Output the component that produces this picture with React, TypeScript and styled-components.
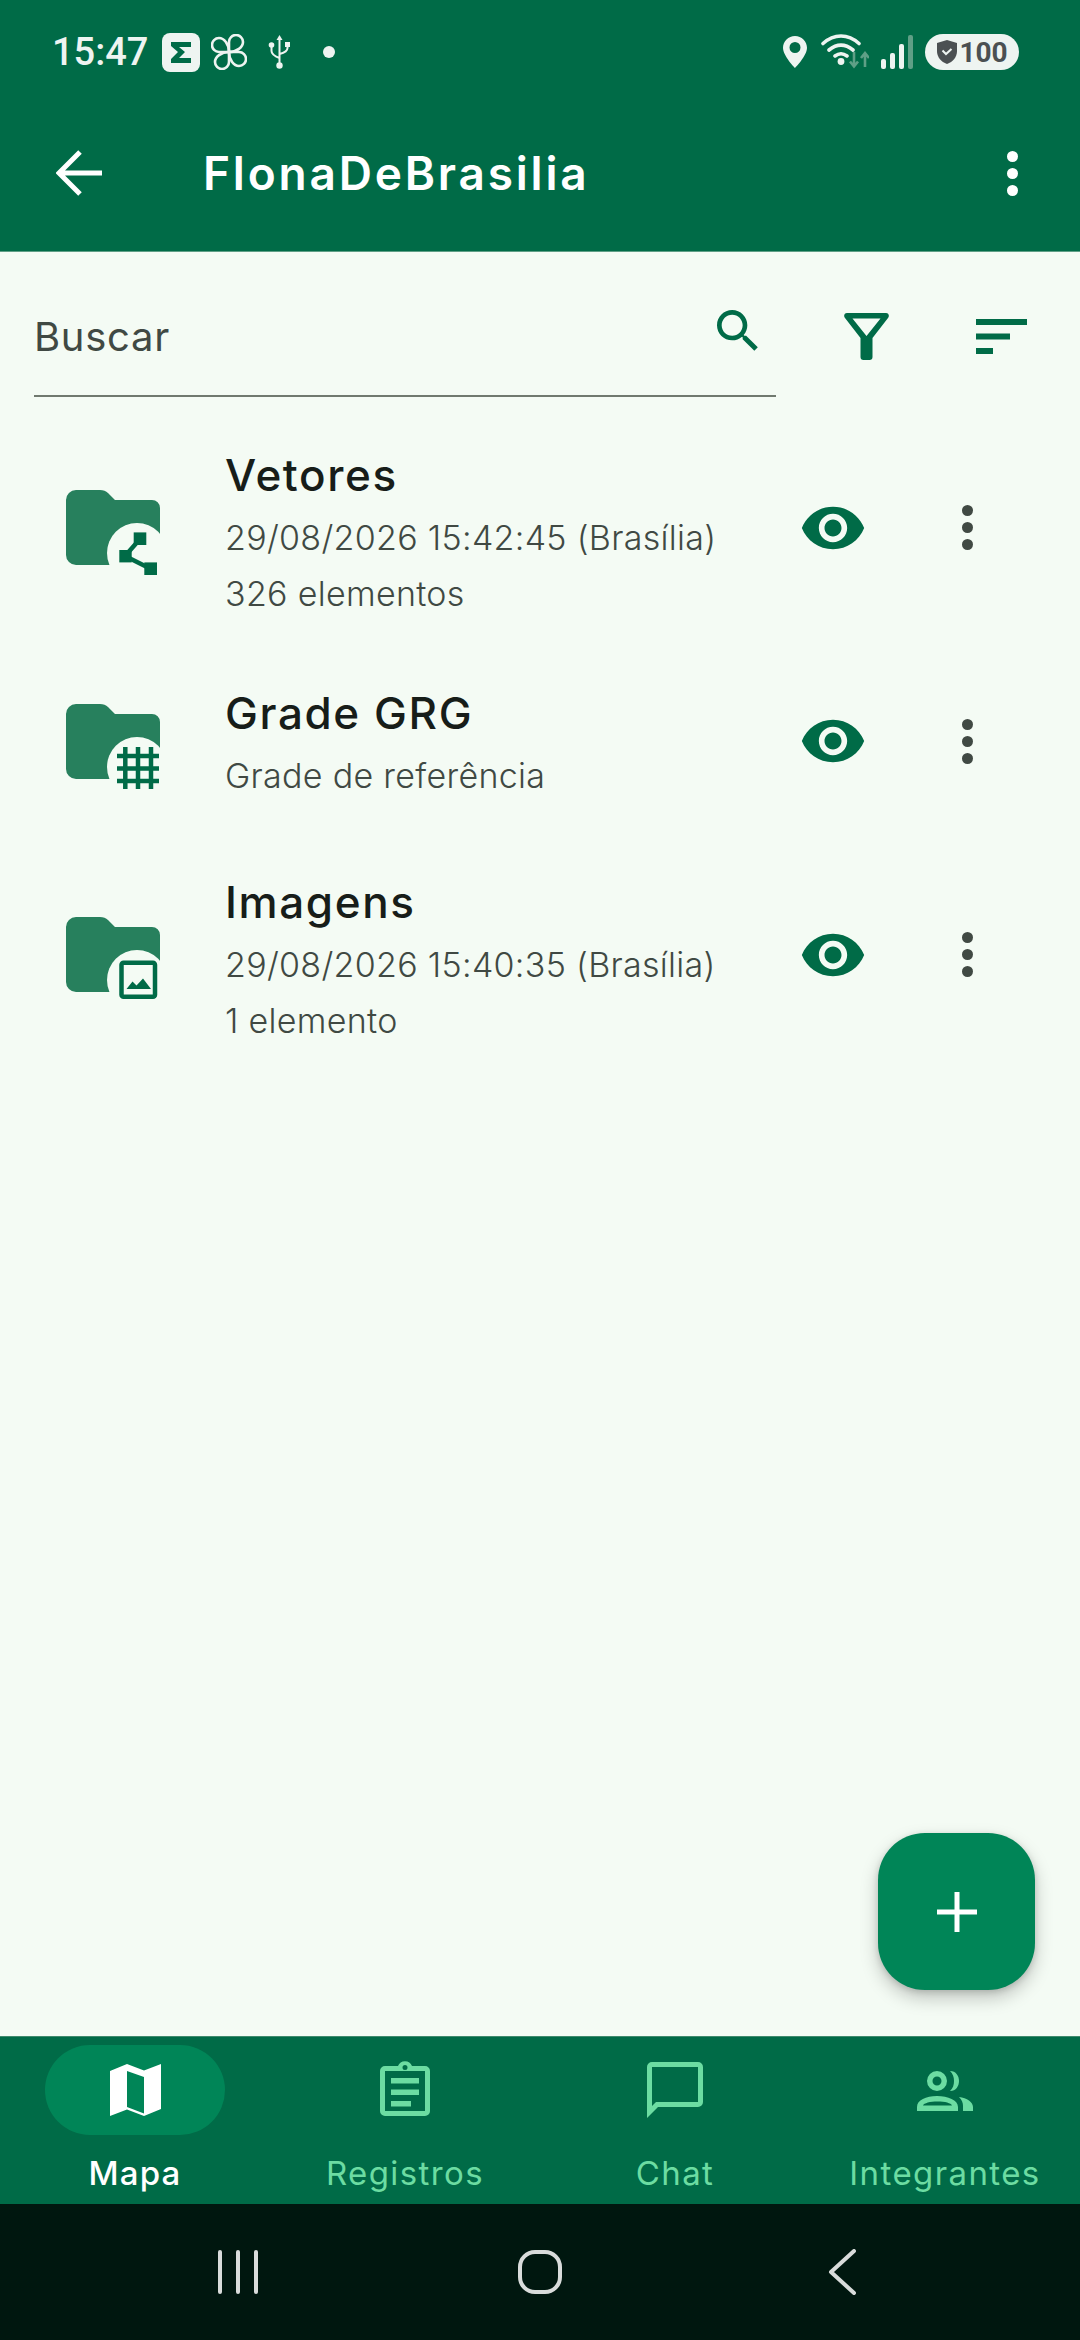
import React from "react";
import styled, { createGlobalStyle } from "styled-components";

const GREEN = "#006b47";
const MINT = "#6cdca2";

const GlobalStyle = createGlobalStyle`
  html, body {
    margin: 0;
    padding: 0;
    background: #f4fbf4;
    font-family: "Inter", "Liberation Sans", sans-serif;
  }
  * {
    box-sizing: border-box;
  }
`;

const Screen = styled.div`
  position: relative;
  display: flex;
  flex-direction: column;
  width: 1080px;
  height: 2340px;
  overflow: hidden;
  background: #f4fbf4;
`;

const Header = styled.header`
  background: ${GREEN};
  color: #fff;
  border-bottom: 1px solid #5f9f86;
  height: 252px;
`;

const StatusBar = styled.div`
  display: flex;
  align-items: center;
  justify-content: space-between;
  height: 104px;
  padding: 0 61px 0 52px;
  color: #eef4f1;
`;

const StatusGroup = styled.div<{ $gap: number }>`
  display: flex;
  align-items: center;
  gap: ${(p) => p.$gap}px;
`;

const Clock = styled.span`
  font-family: "Roboto", sans-serif;
  font-size: 38px;
  font-weight: 500;
  margin-right: 3px;
`;

const BatteryPill = styled.div`
  display: flex;
  align-items: center;
  justify-content: center;
  gap: 2px;
  width: 94px;
  height: 36px;
  border-radius: 18px;
  background: #eef4f1;
  color: #4b5052;
  font-family: "Roboto", sans-serif;
  font-size: 28px;
  font-weight: 700;
`;

const Toolbar = styled.div`
  display: flex;
  align-items: center;
  height: 138px;
  padding: 0 62px 0 56px;
`;

const ToolbarTitle = styled.h1`
  flex: 1;
  margin: 0 0 0 101px;
  font-size: 46px;
  font-weight: 600;
  letter-spacing: 2.8px;
`;

const SearchRow = styled.div`
  display: flex;
  align-items: flex-end;
  height: 145px;
  padding-left: 34px;
  flex-shrink: 0;
`;

const SearchField = styled.div`
  display: flex;
  align-items: center;
  justify-content: space-between;
  width: 742px;
  height: 144px;
  padding: 24px 10px 0 0;
  border-bottom: 2px solid #70796f;
`;

const SearchLabel = styled.span`
  font-size: 40px;
  color: #404943;
  letter-spacing: 0.7px;
`;

const ToolSlot = styled.div<{ $width: number }>`
  display: flex;
  align-items: center;
  justify-content: center;
  width: ${(p) => p.$width}px;
  height: 144px;
  padding-top: 22px;
`;

const List = styled.ul`
  flex: 1;
  list-style: none;
  margin: 24px 0 0;
  padding: 0;
`;

const Row = styled.li`
  display: grid;
  grid-template-columns: 159px 1fr 135px 135px;
  align-items: center;
  height: 213.5px;
  padding: 0 45px 0 66px;
`;

const RowText = styled.div`
  display: flex;
  flex-direction: column;
`;

const RowTitle = styled.div`
  font-size: 44px;
  line-height: 70px;
  font-weight: 500;
  letter-spacing: 1.6px;
  color: #171d19;
`;

const RowMeta = styled.div`
  font-size: 34px;
  line-height: 56px;
  font-weight: 300;
  letter-spacing: 0.3px;
  color: #404943;

  & + & {
    margin-bottom: -7px;
  }
`;

const ActionSlot = styled.div`
  display: flex;
  align-items: center;
  justify-content: center;
`;

const Fab = styled.button`
  position: absolute;
  left: 878px;
  top: 1833px;
  display: flex;
  align-items: center;
  justify-content: center;
  width: 157px;
  height: 157px;
  padding: 0;
  border: 0;
  border-radius: 47px;
  background: #008557;
  box-shadow: 0 8px 18px rgba(0, 0, 0, 0.22), 0 2px 6px rgba(0, 0, 0, 0.14);
`;

const BottomNav = styled.nav`
  display: grid;
  grid-template-columns: repeat(4, 270px);
  height: 168px;
  background: ${GREEN};
  border-top: 1px solid #3f8a6d;
  flex-shrink: 0;
`;

const Tab = styled.div`
  display: flex;
  flex-direction: column;
  align-items: center;
`;

const TabIcon = styled.div<{ $active?: boolean }>`
  display: flex;
  align-items: center;
  justify-content: center;
  width: 180px;
  height: 90px;
  margin-top: 8px;
  border-radius: 45px;
  background: ${(p) => (p.$active ? "#008557" : "transparent")};
`;

const TabLabel = styled.span<{ $active?: boolean }>`
  margin-top: 18px;
  font-size: 33px;
  line-height: 40px;
  font-weight: ${(p) => (p.$active ? 500 : 400)};
  letter-spacing: ${(p) => (p.$active ? 1.2 : 1.4)}px;
  color: ${(p) => (p.$active ? "#fff" : MINT)};
`;

const SystemNav = styled.div`
  display: grid;
  grid-template-columns: 1fr 1fr 1fr;
  align-items: center;
  height: 136px;
  padding: 0 87px;
  background: #00170f;
  flex-shrink: 0;
`;

const SystemKey = styled.div`
  display: flex;
  justify-content: center;
`;

const DotsIcon = ({ color, r = 5.5, gap = 17 }: { color: string; r?: number; gap?: number }) => (
  <svg width={r * 2} height={gap * 2 + r * 2} viewBox={`0 0 ${r * 2} ${gap * 2 + r * 2}`}>
    <circle cx={r} cy={r} r={r} fill={color} />
    <circle cx={r} cy={r + gap} r={r} fill={color} />
    <circle cx={r} cy={r + gap * 2} r={r} fill={color} />
  </svg>
);

const EyeIcon = () => (
  <svg width="68" height="68" viewBox="0 0 24 24" fill={GREEN}>
    <path d="M12 4.5C7 4.5 2.73 7.61 1 12c1.73 4.39 6 7.5 11 7.5s9.27-3.11 11-7.5c-1.73-4.39-6-7.5-11-7.5zM12 17c-2.76 0-5-2.24-5-5s2.24-5 5-5 5 2.24 5 5-2.24 5-5 5zm0-8c-1.66 0-3 1.34-3 3s1.34 3 3 3 3-1.34 3-3-1.34-3-3-3z" />
  </svg>
);

const FolderBase = ({ children }: { children: React.ReactNode }) => (
  <svg width="96" height="75" viewBox="0 0 96 75" style={{ overflow: "visible", display: "block" }}>
    <path
      d="M0 10a10 10 0 0 1 10-10h24q5 0 8 3l7 7h37a8 8 0 0 1 8 8v47a10 10 0 0 1-10 10H10a10 10 0 0 1-10-10z"
      fill="#27805d"
    />
    <circle cx="71" cy="63" r="30" fill="#f4fbf4" />
    <rect x="41" y="75" width="56" height="22" fill="#f4fbf4" />
    {children}
  </svg>
);

const VectorFolder = () => (
  <FolderBase>
    <path d="M59 66l15-17M59 66l26 13" stroke={GREEN} strokeWidth="4.5" fill="none" />
    <rect x="67.7" y="42.4" width="12.6" height="12.6" fill={GREEN} />
    <rect x="53.3" y="60" width="12.4" height="12.4" fill={GREEN} />
    <rect x="78.3" y="72.4" width="12.7" height="12.6" fill={GREEN} />
  </FolderBase>
);

const GridFolder = () => (
  <FolderBase>
    <path
      d="M59.3 43v42M72 43v42M85 43v42M51 52h42M51 64.5h42M51 77h42"
      stroke={GREEN}
      strokeWidth="4.5"
      fill="none"
    />
  </FolderBase>
);

const ImageFolder = () => (
  <FolderBase>
    <rect x="55.5" y="45.7" width="33.5" height="34" rx="2" stroke={GREEN} strokeWidth="4.5" fill="none" />
    <path d="M60.5 72l6-7.5 4 4 6.5-7 8 10.5z" fill={GREEN} />
  </FolderBase>
);

const rows = [
  { title: "Vetores", meta: ["29/08/2026 15:42:45 (Brasília)", "326 elementos"], Icon: VectorFolder },
  { title: "Grade GRG", meta: ["Grade de referência"], Icon: GridFolder },
  { title: "Imagens", meta: ["29/08/2026 15:40:35 (Brasília)", "1 elemento"], Icon: ImageFolder },
];

const petal = "M18 18V8a7 7 0 0 1 14 0c0 5-6 10-14 10z";

export default function App() {
  return (
    <Screen>
      <GlobalStyle />
      <Header>
        <StatusBar>
          <StatusGroup $gap={11}>
            <Clock>15:47</Clock>
            <svg width="38" height="39" viewBox="0 0 38 39">
              <rect width="38" height="39" rx="8" fill="#eef4f1" />
              <path d="M9 9h20v5H17l6 5-6 6h12v5H9v-4l7-7-7-6z" fill={GREEN} />
            </svg>
            <svg width="36" height="36" viewBox="0 0 36 36" fill="none" stroke="#eef4f1" strokeWidth="2.6" strokeLinejoin="round">
              <path d={petal} />
              <path d={petal} transform="rotate(90 18 18)" />
              <path d={petal} transform="rotate(180 18 18)" />
              <path d={petal} transform="rotate(270 18 18)" />
            </svg>
            <svg width="23" height="34" viewBox="0 0 23 34" fill="none" stroke="#eef4f1" strokeWidth="2" style={{ margin: "0 21px 0 10px" }}>
              <path d="M11.5 4v25M3.5 11v5q0 4 8 7M19.5 10v3q0 4-8 6" />
              <path d="M11.5 0l3 5h-6z" fill="#eef4f1" stroke="none" />
              <circle cx="3.5" cy="10" r="2.8" fill="#eef4f1" stroke="none" />
              <rect x="17" y="7" width="5" height="5" fill="#eef4f1" stroke="none" />
              <circle cx="11.5" cy="30.5" r="3.2" fill="#eef4f1" stroke="none" />
            </svg>
            <svg width="12" height="12" viewBox="0 0 12 12">
              <circle cx="6" cy="6" r="6" fill="#eef4f1" />
            </svg>
          </StatusGroup>
          <StatusGroup $gap={12}>
            <svg width="24" height="32" viewBox="0 0 24 32" style={{ marginRight: 2 }}>
              <path
                fillRule="evenodd"
                d="M12 0C5.4 0 0 5.2 0 11.8 0 20 12 32 12 32s12-12 12-20.200C24 5.200 18.600 0 12 0zm0 17a5.500 5.500 0 1 1 0-11 5.500 5.500 0 0 1 0 11z"
                fill="#eef4f1"
              />
            </svg>
            <svg width="48" height="36" viewBox="0 0 48 36" fill="none">
              <path d="M2 9.500C13 -0.500 27 -0.500 38 9.500M8 16c8-6.500 16-6.500 24 0M14 22c4-3 8-3 12 0" stroke="#eef4f1" strokeWidth="3.600" strokeLinecap="round" />
              <circle cx="20" cy="27.500" r="3.400" fill="#eef4f1" />
              <path d="M33 18v14M29 27.500l4 5 4-5M44 33V19M40 24l4-5 4 5" stroke="#5f9f86" strokeWidth="2.600" />
            </svg>
            <svg width="32" height="34" viewBox="0 0 32 34">
              <rect x="0" y="24" width="5" height="10" rx="2" fill="#eef4f1" />
              <rect x="9" y="18" width="5" height="16" rx="2" fill="#eef4f1" />
              <rect x="18" y="9" width="5" height="25" rx="2" fill="#eef4f1" />
              <rect x="27" y="0" width="5" height="34" rx="2" fill="#5f9f86" />
            </svg>
            <BatteryPill>
              <svg width="20" height="24" viewBox="0 0 20 24" style={{ marginLeft: 1 }}>
                <path d="M10 0l10 3v8c0 6-4 11-10 13C4 22 0 17 0 11V3z" fill="#4b5052" />
                <path d="M5.500 10.500l3.500 3.500 5.500-5" fill="none" stroke="#eef4f1" strokeWidth="2" />
              </svg>
              100
            </BatteryPill>
          </StatusGroup>
        </StatusBar>
        <Toolbar>
          <svg width="46" height="46" viewBox="0 0 46 46" fill="none" stroke="#fff" strokeWidth="5">
            <path d="M46 23H4M24 2L3 23l21 21" />
          </svg>
          <ToolbarTitle>FlonaDeBrasilia</ToolbarTitle>
          <DotsIcon color="#fff" />
        </Toolbar>
      </Header>

      <SearchRow>
        <SearchField>
          <SearchLabel>Buscar</SearchLabel>
          <svg width="56" height="56" viewBox="0 0 24 24" fill={GREEN} style={{ marginTop: -10 }}>
            <path d="M15.500 14h-.79l-.28-.27C15.410 12.590 16 11.110 16 9.500 16 5.910 13.090 3 9.500 3S3 5.910 3 9.500 5.910 16 9.500 16c1.610 0 3.090-.59 4.230-1.570l.27.28v.79l5 4.990L20.490 19l-4.990-5zm-6 0C7.010 14 5 11.990 5 9.500S7.010 5 9.500 5 14 7.010 14 9.500 11.990 14 9.500 14z" />
          </svg>
        </SearchField>
        <ToolSlot $width={180}>
          <svg width="45" height="47" viewBox="0 0 45 47">
            <path
              fillRule="evenodd"
              d="M3 0h39c2.500 0 3.700 2.800 2.200 4.700L28.500 25v19a3 3 0 0 1-3 3h-6a3 3 0 0 1-3-3V25L.8 4.700C-.7 2.800.5 0 3 0zm5.500 5.500L22.500 23l14-17.500z"
              fill={GREEN}
            />
          </svg>
        </ToolSlot>
        <ToolSlot $width={90}>
          <svg width="51" height="35" viewBox="0 0 51 35">
            <rect width="51" height="6" fill={GREEN} />
            <rect y="14.500" width="34" height="6" fill={GREEN} />
            <rect y="29" width="17" height="6" fill={GREEN} />
          </svg>
        </ToolSlot>
      </SearchRow>

      <List>
        {rows.map(({ title, meta, Icon }) => (
          <Row key={title}>
            <Icon />
            <RowText>
              <RowTitle>{title}</RowTitle>
              {meta.map((line) => (
                <RowMeta key={line}>{line}</RowMeta>
              ))}
            </RowText>
            <ActionSlot>
              <EyeIcon />
            </ActionSlot>
            <ActionSlot>
              <DotsIcon color="#404943" />
            </ActionSlot>
          </Row>
        ))}
      </List>

      <Fab aria-label="Adicionar">
        <svg width="40" height="40" viewBox="0 0 40 40">
          <path d="M17.500 0h5v17.500H40v5H22.500V40h-5V22.500H0v-5h17.500z" fill="#fff" />
        </svg>
      </Fab>

      <BottomNav>
        <Tab>
          <TabIcon $active>
            <svg width="51" height="52" viewBox="0 0 51 52">
              <path
                fillRule="evenodd"
                d="M17 0l17 6.500L51 0v45l-17 7-17-6.500L0 52V7zm0 7v36l17 6.500V13z"
                fill="#fff"
              />
            </svg>
          </TabIcon>
          <TabLabel $active>Mapa</TabLabel>
        </Tab>
        <Tab>
          <TabIcon>
            <svg width="50" height="56" viewBox="0 0 50 56" style={{ marginTop: -4 }}>
              <path
                fillRule="evenodd"
                d="M5 6h13a7.500 7.500 0 0 1 14 0h13a5 5 0 0 1 5 5v40a5 5 0 0 1-5 5H5a5 5 0 0 1-5-5V11a5 5 0 0 1 5-5zm0 5v40h40V11zm20-6a2.500 2.500 0 1 0 0 5 2.500 2.500 0 0 0 0-5z"
                fill={MINT}
              />
              <rect x="11" y="18" width="28" height="5.500" fill={MINT} />
              <rect x="11" y="29.500" width="28" height="5.500" fill={MINT} />
              <rect x="11" y="41" width="20" height="5.500" fill={MINT} />
            </svg>
          </TabIcon>
          <TabLabel>Registros</TabLabel>
        </Tab>
        <Tab>
          <TabIcon>
            <svg width="56" height="56" viewBox="0 0 56 56">
              <path
                fillRule="evenodd"
                d="M5 0h46a5 5 0 0 1 5 5v35a5 5 0 0 1-5 5H11L0 56V5a5 5 0 0 1 5-5zm0 5v39l4-4h42V5z"
                fill={MINT}
              />
            </svg>
          </TabIcon>
          <TabLabel>Chat</TabLabel>
        </Tab>
        <Tab>
          <TabIcon>
            <svg width="56" height="40" viewBox="0 0 56 40" style={{ marginTop: 2 }}>
              <path
                fillRule="evenodd"
                d="M20 0a10 10 0 1 1 0 20 10 10 0 0 1 0-20zm0 5.500a4.500 4.500 0 1 0 0 9 4.500 4.500 0 0 0 0-9zM0 40v-4c0-7 9-11 20-11s21 4 21 11v4zm6-5.500h29c-1-2.500-7-4-14.500-4S7 32 6 34.500z"
                fill={MINT}
              />
              <path d="M33 0c6 0 9 5 9 10s-3 10-9 10c3-3 4-6 4-10s-1-7-4-10zM42 26c8 1 14 5 14 10v4H46v-5c0-3-1-6-4-9z" fill={MINT} />
            </svg>
          </TabIcon>
          <TabLabel>Integrantes</TabLabel>
        </Tab>
      </BottomNav>

      <SystemNav>
        <SystemKey>
          <svg width="40" height="44" viewBox="0 0 40 44" fill="#d9dcdb">
            <rect x="0" y="0" width="4" height="44" rx="2" />
            <rect x="18" y="0" width="4" height="44" rx="2" />
            <rect x="36" y="0" width="4" height="44" rx="2" />
          </svg>
        </SystemKey>
        <SystemKey>
          <svg width="44" height="44" viewBox="0 0 44 44" fill="none" stroke="#d9dcdb" strokeWidth="4">
            <rect x="2" y="2" width="40" height="40" rx="15" />
          </svg>
        </SystemKey>
        <SystemKey>
          <svg width="28" height="46" viewBox="0 0 28 46" fill="none" stroke="#d9dcdb" strokeWidth="4" strokeLinecap="round" strokeLinejoin="round">
            <path d="M26 2L3 23l23 21" />
          </svg>
        </SystemKey>
      </SystemNav>
    </Screen>
  );
}
